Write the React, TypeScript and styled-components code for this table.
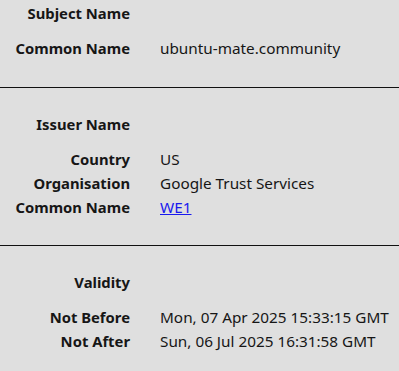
import styled, { createGlobalStyle } from "styled-components";

const GlobalStyle = createGlobalStyle`
  html, body {
    margin: 0;
    padding: 0;
    background: #dfdfdf;
  }
  body {
    font-family: "Noto Sans", "DejaVu Sans", sans-serif;
    font-size: 15.3px;
    color: #161616;
  }
`;

type Field = { label: string; value: string; link?: boolean };
type Group = { title: string; fields: Field[] };

const groups: Group[] = [
  {
    title: "Subject Name",
    fields: [{ label: "Common Name", value: "ubuntu-mate.community" }],
  },
  {
    title: "Issuer Name",
    fields: [
      { label: "Country", value: "US" },
      { label: "Organisation", value: "Google Trust Services" },
      { label: "Common Name", value: "WE1", link: true },
    ],
  },
  {
    title: "Validity",
    fields: [
      { label: "Not Before", value: "Mon, 07 Apr 2025 15:33:15 GMT" },
      { label: "Not After", value: "Sun, 06 Jul 2025 16:31:58 GMT" },
    ],
  },
];

function App() {
  return (
    <>
      <GlobalStyle />
      <Page>
        {groups.map((group, i) => (
          <Section key={group.title} $first={i === 0}>
            <Title>{group.title}</Title>
            <Rows>
              {group.fields.map((field) => (
                <Row key={field.label}>
                  <Label>{field.label}</Label>
                  {field.link ? (
                    <Link href="#">{field.value}</Link>
                  ) : (
                    <Value>{field.value}</Value>
                  )}
                </Row>
              ))}
            </Rows>
          </Section>
        ))}
      </Page>
    </>
  );
}

const Page = styled.div`
  width: 399px;
`;

const Section = styled.section<{ $first?: boolean }>`
  padding: ${(p) => (p.$first ? "1px 0 27px" : "24px 0 26px")};
  border-bottom: 1px solid #111;

  &:last-child {
    border-bottom: none;
  }
`;

const Title = styled.div`
  width: 130px;
  height: 24px;
  line-height: 24px;
  text-align: right;
  font-size: 14.8px;
  font-weight: 700;
  white-space: nowrap;
  margin-bottom: 11px;
`;

const Rows = styled.div`
  display: flex;
  flex-direction: column;
`;

const Row = styled.div`
  display: grid;
  grid-template-columns: 130px 1fr;
  column-gap: 30px;
  line-height: 24px;
`;

const Label = styled.span`
  text-align: right;
  font-size: 14.8px;
  font-weight: 700;
  white-space: nowrap;
`;

const Value = styled.span`
  white-space: nowrap;
`;

const Link = styled.a`
  justify-self: start;
  color: #1a1aee;
  text-decoration: underline;
`;

export default App;
